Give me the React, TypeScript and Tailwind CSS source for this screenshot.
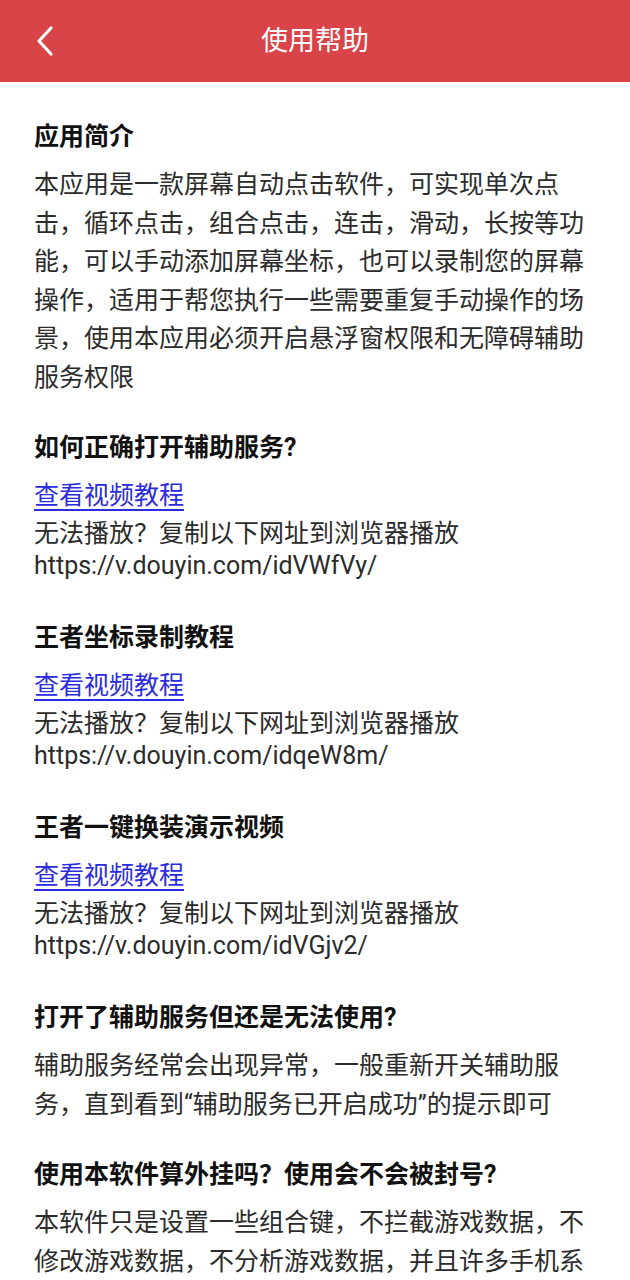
import React from 'react';

const FONT = { fontFamily: 'Roboto, "Noto Sans CJK SC", "Noto Sans", sans-serif' };

function Heading({ children, className = '' }: { children: React.ReactNode; className?: string }) {
  return <h2 className={`text-[25px] font-bold leading-[32px] text-[#111111] ${className}`}>{children}</h2>;
}

function Body({ children }: { children: React.ReactNode }) {
  return <p className="mt-[13px] text-[25px] leading-[38.5px] text-[#2b2b2b]">{children}</p>;
}

function VideoBlock({ title, url, className = '' }: { title: string; url: string; className?: string }) {
  return (
    <section className={className}>
      <Heading>{title}</Heading>
      <a className="mt-4 block text-[25px] leading-[32px] text-[#2b2be0] underline underline-offset-[5px] decoration-[1.5px]">
        查看视频教程
      </a>
      <p className="mt-[6px] text-[25px] leading-[32px] text-[#2b2b2b]">
        无法播放？复制以下网址到浏览器播放
        <br />
        {url}
      </p>
    </section>
  );
}

export default function App() {
  return (
    <div className="w-[630px] min-h-[1280px] bg-white" style={FONT}>
      {/* Top bar */}
      <header className="relative flex h-[82px] items-center justify-center bg-[#d94448]">
        <button className="absolute left-[30px] top-[22px] flex h-[38px] w-[30px] items-center justify-center">
          <svg width="22" height="32" viewBox="0 0 22 32" fill="none">
            <path d="M17 3 L5 16 L17 29" stroke="white" strokeWidth="3.2" strokeLinecap="round" strokeLinejoin="round" />
          </svg>
        </button>
        <h1 className="text-[27px] leading-none text-white">使用帮助</h1>
      </header>

      <main className="px-[34px] pt-[39px]">
        <section>
          <Heading>应用简介</Heading>
          <Body>
            本应用是一款屏幕自动点击软件，可实现单次点击，循环点击，组合点击，连击，滑动，长按等功能，可以手动添加屏幕坐标，也可以录制您的屏幕操作，适用于帮您执行一些需要重复手动操作的场景，使用本应用必须开启悬浮窗权限和无障碍辅助服务权限
          </Body>
        </section>

        <VideoBlock className="mt-[35px]" title="如何正确打开辅助服务?" url="https://v.douyin.com/idVWfVy/" />
        <VideoBlock className="mt-[40px]" title="王者坐标录制教程" url="https://v.douyin.com/idqeW8m/" />
        <VideoBlock className="mt-[40px]" title="王者一键换装演示视频" url="https://v.douyin.com/idVGjv2/" />

        <section className="mt-[40px]">
          <Heading>打开了辅助服务但还是无法使用?</Heading>
          <Body>辅助服务经常会出现异常，一般重新开关辅助服务，直到看到“辅助服务已开启成功”的提示即可</Body>
        </section>

        <section className="mt-[35px]">
          <Heading>使用本软件算外挂吗？使用会不会被封号?</Heading>
          <Body>
            本软件只是设置一些组合键，不拦截游戏数据，不修改游戏数据，不分析游戏数据，并且许多手机系统自带此功能，放心使用
          </Body>
        </section>
      </main>
    </div>
  );
}
